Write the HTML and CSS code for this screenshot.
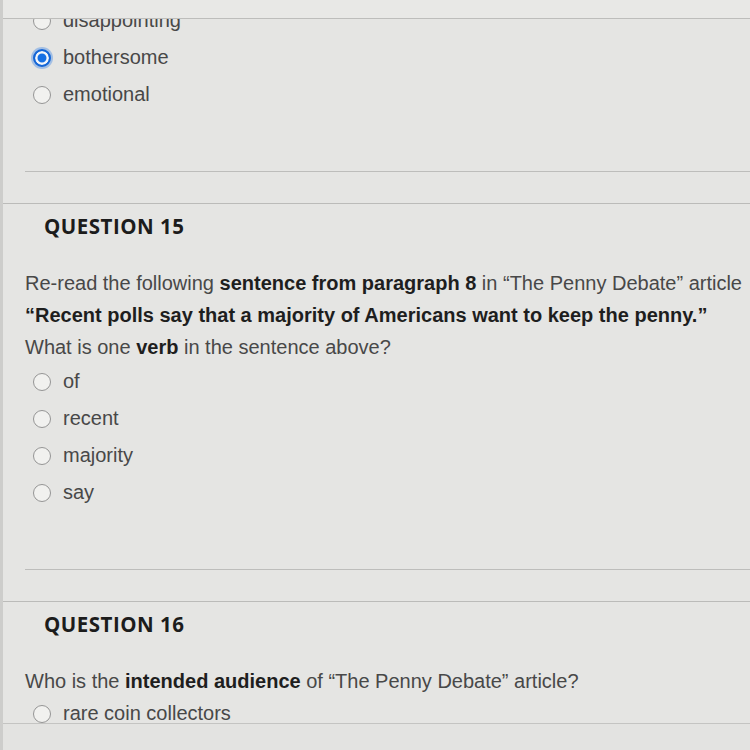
FILE: index.html
```html
<!DOCTYPE html>
<html lang="en">
<head>
<meta charset="utf-8">
<title>Quiz</title>
<link rel="stylesheet" href="styles.css">
</head>
<body>
<div class="page">
  <div class="topbar"></div>

  <section class="q q-partial">
    <div class="q-body q-body-top">
      <ul class="options">
        <li class="option"><span class="radio"></span><span class="label">disappointing</span></li>
        <li class="option"><span class="radio radio-checked"></span><span class="label">bothersome</span></li>
        <li class="option"><span class="radio"></span><span class="label">emotional</span></li>
      </ul>
    </div>
  </section>

  <section class="q">
    <h2 class="q-title">QUESTION 15</h2>
    <div class="q-body">
      <div class="prompt">
        <div class="line">Re-read the following <b>sentence from paragraph 8</b> in “The Penny Debate” article</div>
        <div class="line"><b>“Recent polls say that a majority of Americans want to keep the penny.”</b></div>
        <div class="line">What is one <b>verb</b> in the sentence above?</div>
      </div>
      <ul class="options">
        <li class="option"><span class="radio"></span><span class="label">of</span></li>
        <li class="option"><span class="radio"></span><span class="label">recent</span></li>
        <li class="option"><span class="radio"></span><span class="label">majority</span></li>
        <li class="option"><span class="radio"></span><span class="label">say</span></li>
      </ul>
    </div>
  </section>

  <section class="q">
    <h2 class="q-title">QUESTION 16</h2>
    <div class="q-body">
      <div class="prompt">
        <div class="line">Who is the <b>intended audience</b> of “The Penny Debate” article?</div>
      </div>
      <ul class="options options-tight">
        <li class="option"><span class="radio"></span><span class="label">rare coin collectors</span></li>
      </ul>
    </div>
  </section>

  <div class="bottom-shade"></div>
</div>
</body>
</html>
```

FILE: styles.css
```css
html, body {
  margin: 0;
  padding: 0;
  height: 750px;
  overflow: hidden;
}

body {
  background: #e4e4e2;
  font-family: "Liberation Sans", Arial, sans-serif;
  color: #484848;
  font-size: 20px;
}

.page {
  position: relative;
  height: 750px;
  overflow: hidden;
  border-left: 3px solid #cdcdcb;
  background: #e5e5e3;
}

.topbar {
  position: absolute;
  top: 0;
  left: 0;
  right: 0;
  height: 18px;
  background: #e8e8e6;
  border-bottom: 1px solid #bdbdbb;
  z-index: 2;
}

.q {
  padding-bottom: 31px;
  border-bottom: 1px solid #bbbbb9;
}

.q-title {
  margin: 0;
  padding-left: 41px;
  height: 44px;
  line-height: 44px;
  font-family: "Open Sans", "Liberation Sans", sans-serif;
  font-weight: 700;
  font-size: 20.5px;
  color: #1c1c1c;
  letter-spacing: 0.5px;
}

.q-body {
  margin-left: 22px;
  padding-top: 19px;
  padding-bottom: 58px;
  border-bottom: 1px solid #bdbdbb;
}

.q-body-top {
  padding-top: 2px;
}

.prompt .line {
  height: 32px;
  line-height: 32px;
  white-space: nowrap;
}

.prompt b {
  color: #1e1e1e;
  font-weight: 700;
}

.options {
  list-style: none;
  margin: 0;
  padding: 0 0 0 8px;
}

.options-tight .option {
  height: 33px;
}

.option {
  display: flex;
  align-items: center;
  gap: 12px;
  height: 37px;
  white-space: nowrap;
}

.radio {
  flex: none;
  width: 18px;
  height: 18px;
  box-sizing: border-box;
  border-radius: 50%;
  border: 1.5px solid #959595;
  background: #f1f1ef;
}

.radio-checked {
  border: 2px solid #1566d6;
  background: #1670e4;
  box-shadow: inset 0 0 0 2.5px #f4f6fa, 0 0 0 2px rgba(40, 120, 230, 0.35);
}

.label {
  color: #484848;
}

.bottom-shade {
  position: absolute;
  left: 0;
  right: 0;
  top: 723px;
  bottom: 0;
  border-top: 1px solid #c4c4c2;
  background: #e3e3e1;
}
```
